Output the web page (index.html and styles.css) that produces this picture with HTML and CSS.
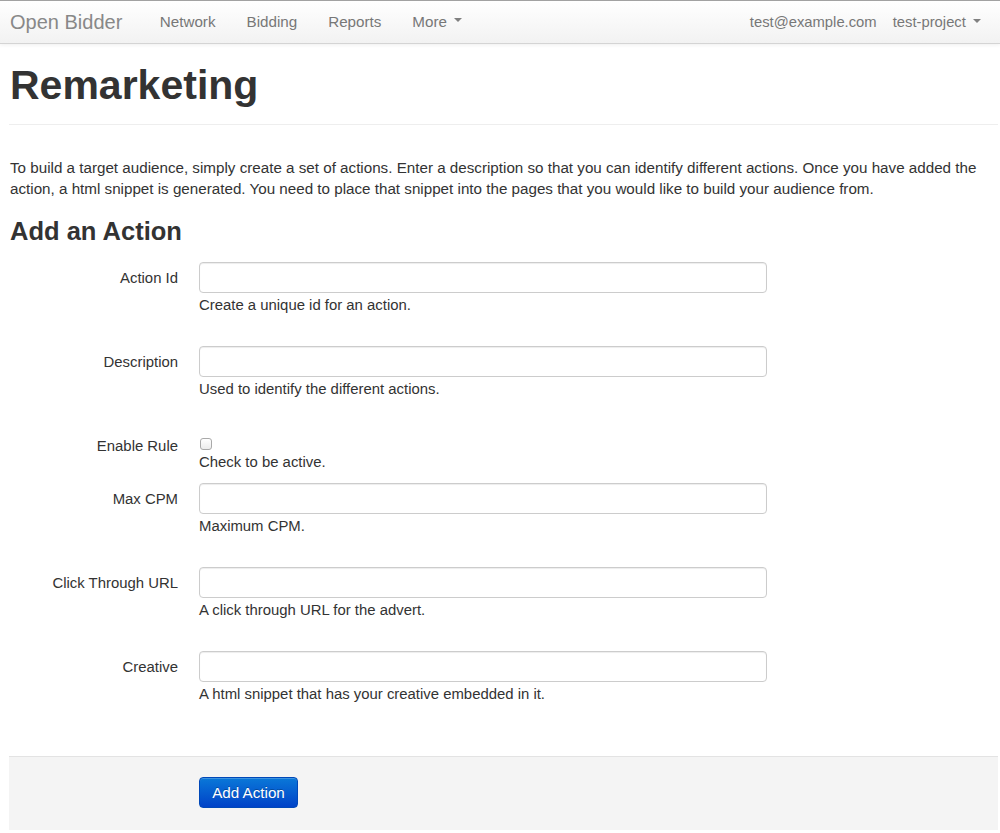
FILE: index.html
```html
<!DOCTYPE html>
<html lang="en">
<head>
<meta charset="utf-8">
<title>Remarketing - Open Bidder</title>
<link rel="stylesheet" href="styles.css">
</head>
<body>
<header class="navbar">
  <a class="brand" href="#">Open Bidder</a>
  <ul class="nav">
    <li><a href="#">Network</a></li>
    <li><a href="#">Bidding</a></li>
    <li><a href="#">Reports</a></li>
    <li><a href="#">More <span class="caret"></span></a></li>
  </ul>
  <ul class="nav nav-right">
    <li><a class="user" href="#">test@example.com</a></li>
    <li><a class="project" href="#">test-project <span class="caret"></span></a></li>
  </ul>
</header>

<main class="page">
  <div class="page-header">
    <h1>Remarketing</h1>
  </div>
  <p class="intro">To build a target audience, simply create a set of actions. Enter a description so that you can identify different actions. Once you have added the action, a html snippet is generated. You need to place that snippet into the pages that you would like to build your audience from.</p>
  <h2>Add an Action</h2>

  <form class="form">
    <div class="row">
      <label class="label">Action Id</label>
      <div class="control">
        <input class="input" type="text">
        <div class="help">Create a unique id for an action.</div>
      </div>
    </div>
    <div class="row">
      <label class="label">Description</label>
      <div class="control">
        <input class="input" type="text">
        <div class="help">Used to identify the different actions.</div>
      </div>
    </div>
    <div class="row row-check">
      <label class="label">Enable Rule</label>
      <div class="control">
        <span class="checkbox"></span>
        <div class="help help-check">Check to be active.</div>
      </div>
    </div>
    <div class="row">
      <label class="label">Max CPM</label>
      <div class="control">
        <input class="input" type="text">
        <div class="help">Maximum CPM.</div>
      </div>
    </div>
    <div class="row">
      <label class="label">Click Through URL</label>
      <div class="control">
        <input class="input" type="text">
        <div class="help">A click through URL for the advert.</div>
      </div>
    </div>
    <div class="row">
      <label class="label">Creative</label>
      <div class="control">
        <input class="input" type="text">
        <div class="help">A html snippet that has your creative embedded in it.</div>
      </div>
    </div>
    <div class="form-actions">
      <button class="btn-primary" type="button">Add Action</button>
    </div>
  </form>
</main>
</body>
</html>
```

FILE: styles.css
```css
* { box-sizing: border-box; }
html, body { margin: 0; padding: 0; background: #fff; }
body {
  font-family: "Liberation Sans", Arial, sans-serif;
  font-size: 15.2px;
  line-height: 21px;
  color: #333;
  overflow: hidden;
}
a { text-decoration: none; }

.navbar {
  display: flex;
  align-items: center;
  height: 44px;
  border-top: 1px solid #a2a2a2;
  border-bottom: 1px solid #d4d4d4;
  background: linear-gradient(to bottom, #ffffff, #f2f2f2);
  box-shadow: 0 1px 4px rgba(0,0,0,0.065);
  padding: 0 4px 0 10px;
}
.brand {
  font-size: 20px;
  color: #888;
  margin-right: 22px;
}
.nav {
  display: flex;
  list-style: none;
  margin: 0;
  padding: 0;
}
.nav a {
  display: block;
  padding: 0 15.5px 1px 15.5px;
  color: #777;
  font-size: 15.2px;
  line-height: 42px;
}
.nav-right { margin-left: auto; }
.nav-right a { font-size: 14.8px; }
.nav-right .user { padding-right: 0; }
.nav-right .project { padding-left: 16px; padding-right: 15px; }
.caret {
  display: inline-block;
  width: 0;
  height: 0;
  margin-left: 3px;
  vertical-align: middle;
  border-top: 4px solid #808080;
  border-left: 4px solid transparent;
  border-right: 4px solid transparent;
  position: relative;
  top: -2px;
}

.page { margin: 0 2px 0 9px; }
.page-header {
  margin-top: 19px;
  padding-bottom: 17px;
  border-bottom: 1px solid #eee;
}
h1 {
  margin: 0;
  padding-left: 1px;
  font-size: 41px;
  line-height: 44px;
  font-weight: bold;
  color: #333;
}
.intro {
  margin: 32px 0 0 1px;
}
h2 {
  margin: 17px 0 16px 1px;
  font-size: 25.5px;
  line-height: 30px;
  font-weight: bold;
  color: #333;
}

.row {
  display: flex;
  margin-bottom: 31px;
}
.label {
  width: 169px;
  flex: none;
  text-align: right;
  padding-top: 6px;
  line-height: 20px;
  font-size: 14.9px;
}
.control { margin-left: 21px; }
.input {
  display: block;
  width: 568px;
  height: 31px;
  margin: 0;
  border: 1px solid #ccc;
  border-radius: 4px;
  box-shadow: inset 0 1px 1px rgba(0,0,0,0.075);
  background: #fff;
  font: inherit;
  padding: 4px 6px;
}
.help {
  margin-top: 2px;
  line-height: 20px;
  font-size: 14.9px;
  color: #333;
}
.row-check { margin-bottom: 11px; }
.row-check .label { padding-top: 6px; }
.checkbox {
  display: block;
  width: 12px;
  height: 12px;
  margin-top: 8px;
  margin-left: 1px;
  border: 1px solid #a9a9a9;
  border-radius: 3px;
  background: linear-gradient(to bottom, #fff, #ececec);
}
.help-check { margin-top: 2px; }

.form-actions {
  margin-top: 52px;
  border-top: 1px solid #e3e3e3;
  background: #f4f4f4;
  padding: 20px 0 22px 190px;
}
.btn-primary {
  display: block;
  height: 31px;
  width: 99px;
  padding: 0;
  border: 1px solid #0048b8;
  border-radius: 4px;
  background: linear-gradient(to bottom, #0a78d8, #0042c8);
  color: #fff;
  font-family: "Liberation Sans", Arial, sans-serif;
  font-size: 15.2px;
  text-shadow: 0 -1px 0 rgba(0,0,0,0.25);
  box-shadow: inset 0 1px 0 rgba(255,255,255,0.2);
}
```
